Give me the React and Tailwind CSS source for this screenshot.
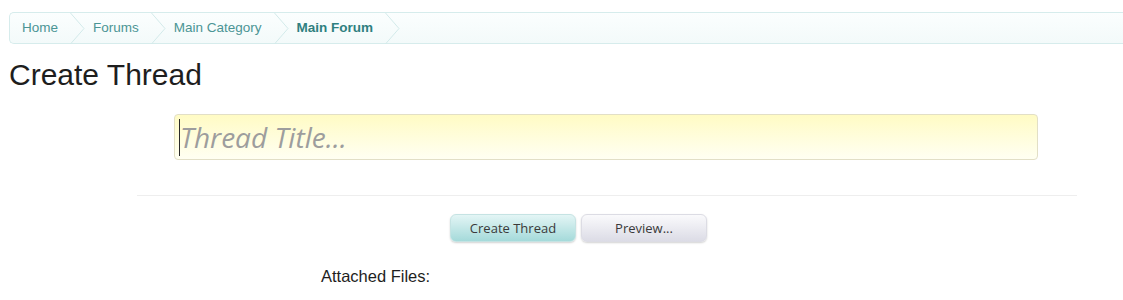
import React from "react";

function Chevron() {
  return (
    <svg width="15" height="31" viewBox="0 0 15 31" className="ml-[12px] shrink-0">
      <polyline points="0.5,0 14,15.5 0.5,31" fill="none" stroke="#d3eaea" strokeWidth="1" />
    </svg>
  );
}

function Crumb({ children, first, bold }) {
  return (
    <div className="flex items-center h-full">
      <span
        className={`${first ? "pl-[12px]" : "pl-[8px]"} ${bold ? "font-bold text-[#2f8080]" : "text-[#4b9595]"} whitespace-nowrap`}
      >
        {children}
      </span>
      <Chevron />
    </div>
  );
}

export default function App() {
  return (
    <div className="w-full h-[300px] overflow-hidden bg-white font-['Liberation_Sans',Arial,sans-serif]">
      <div className="pt-[12px] pl-[9px]">
        <div className="h-[32px] flex items-stretch border border-r-0 border-[#d6ecec] rounded-l-[5px] bg-gradient-to-b from-[#fbfefe] to-[#f3fafa] text-[13.5px]">
          <Crumb first>Home</Crumb>
          <Crumb>Forums</Crumb>
          <Crumb>Main Category</Crumb>
          <Crumb bold>Main Forum</Crumb>
        </div>
      </div>

      <h1 className="mt-[16px] ml-[9px] text-[30px] leading-[30px] text-[#1e1e1e]">Create Thread</h1>

      <div className="mt-[24px] ml-[174px] w-[864px] h-[46px] border border-[#e2dfc6] rounded-[4px] bg-gradient-to-b from-[#fffbc4] to-[#fffff2] flex items-center pl-[4px]">
        <span className="w-[1px] h-[37px] bg-[#2a2a2a]" />
        <span className="italic text-[28px] text-[#9d9d9d] font-['Open_Sans',sans-serif] leading-none">
          Thread Title...
        </span>
      </div>

      <div className="mt-[35px] ml-[137px] w-[940px] h-[1px] bg-[#eeeeee]" />

      <div className="mt-[18px] ml-[450px] flex gap-[5px] font-['Open_Sans',sans-serif] text-[13px] text-[#3a3a3a]">
        <div className="w-[126px] h-[28px] pt-[1px] rounded-[6px] border border-[#c5e3e3] bg-gradient-to-b from-[#e3f5f5] to-[#a4dada] shadow-[0_1px_2px_rgba(0,0,0,0.18)] flex items-center justify-center">
          Create Thread
        </div>
        <div className="w-[126px] h-[28px] pt-[1px] rounded-[6px] border border-[#dcdce4] bg-gradient-to-b from-[#fafafc] to-[#dcdce6] shadow-[0_1px_2px_rgba(0,0,0,0.18)] flex items-center justify-center">
          Preview...
        </div>
      </div>

      <div className="mt-[24px] ml-[321px] text-[16.5px] leading-[20px] text-[#1e1e1e]">Attached Files:</div>
    </div>
  );
}
